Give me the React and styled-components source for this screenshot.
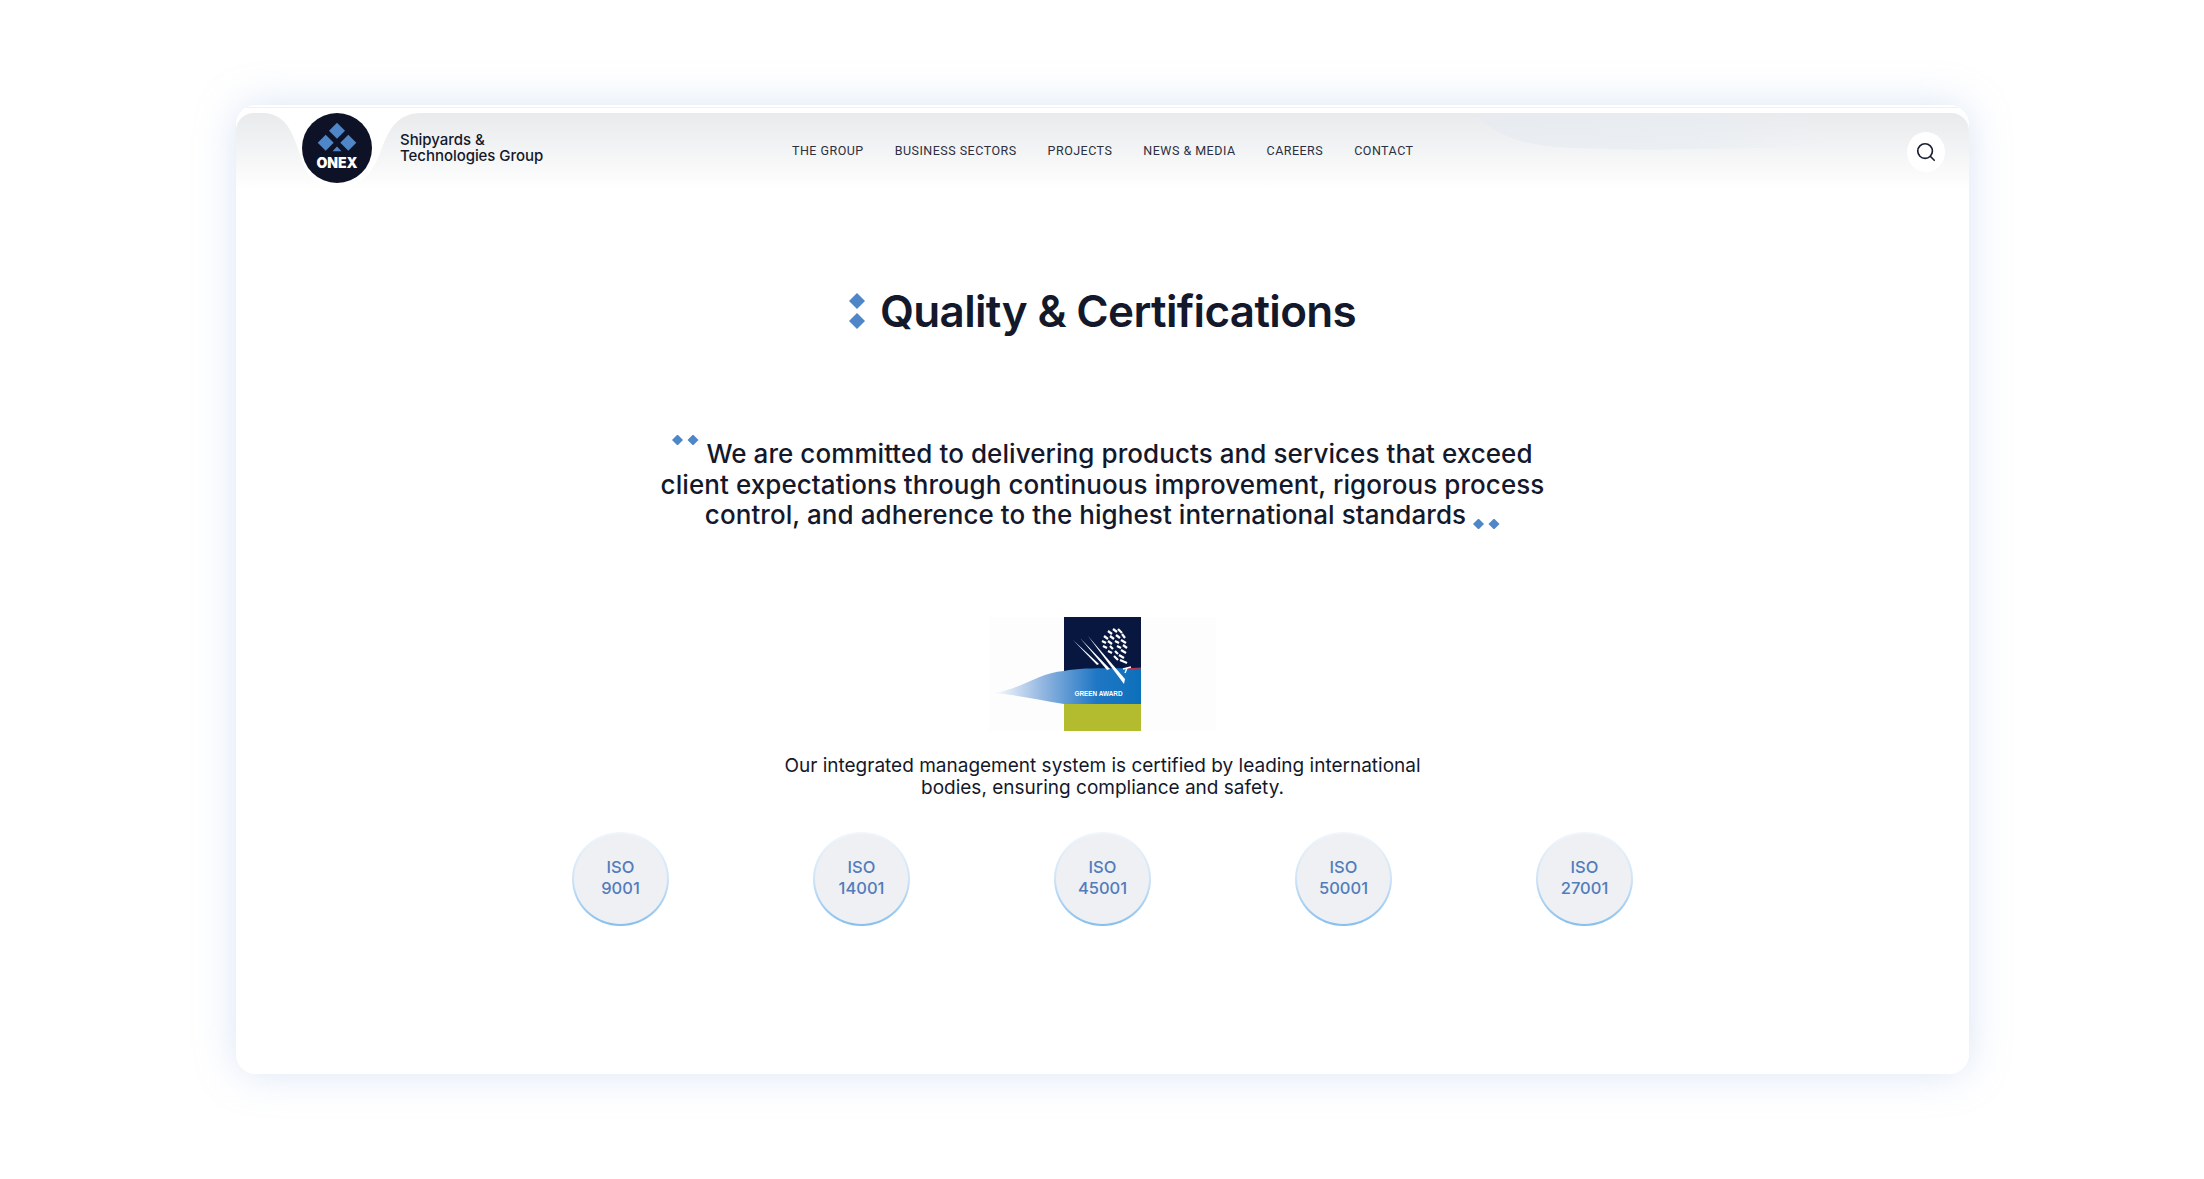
import React from 'react';
import styled, { createGlobalStyle } from 'styled-components';
import { Search } from 'lucide-react';

const GlobalStyle = createGlobalStyle`
  html, body {
    margin: 0;
    background: #fff;
  }
  body {
    font-family: "Inter", "Liberation Sans", sans-serif;
    color: #14182b;
  }
`;

const Page = styled.div`
  width: 2204px;
  height: 1179px;
  padding: 105px 235px 105px 236px;
  box-sizing: border-box;
  overflow: hidden;
`;

const Card = styled.div`
  height: 969px;
  background: linear-gradient(180deg, #fff 2px, #eef1f6 2px, #eef1f6 3px, #fff 3px);
  border-radius: 20px;
  box-shadow: 0 0 40px rgba(150, 180, 225, 0.34);
  padding-top: 8px;
  box-sizing: border-box;
`;

const Header = styled.header`
  position: relative;
  height: 77px;
  padding: 0 24px 6px 66px;
  box-sizing: border-box;
  display: flex;
  align-items: center;
  border-radius: 18px 18px 0 0;
  background: linear-gradient(180deg, #e9eaec 0%, #f3f4f5 50%, #ffffff 100%);
  overflow: hidden;
`;

const HeaderArt = styled.svg`
  position: absolute;
  top: 0;
  left: 0;
  width: 100%;
  height: 77px;
`;

const Brand = styled.div`
  position: relative;
  width: 490px;
  flex: none;
  display: flex;
  align-items: center;
  gap: 28px;
  margin-top: -1px;
`;

const BrandName = styled.div`
  font-size: 15px;
  line-height: 16px;
  font-weight: 500;
  letter-spacing: -0.05px;
  color: #14182b;
`;

const Nav = styled.nav`
  position: relative;
  display: flex;
  gap: 31px;
  margin-top: 5px;
`;

const NavLink = styled.a`
  font-family: "Roboto", "Liberation Sans", sans-serif;
  font-size: 12.5px;
  line-height: 16px;
  letter-spacing: 0.48px;
  color: #2b2f40;
`;

const SearchButton = styled.button`
  position: relative;
  margin: 7px 0 0 auto;
  width: 38px;
  height: 40px;
  border: 0;
  border-radius: 50%;
  background: #fff;
  color: #1a1e30;
  display: flex;
  align-items: center;
  justify-content: center;
  padding: 0;
`;

const Main = styled.main`
  display: flex;
  flex-direction: column;
  align-items: center;
`;

const Title = styled.h1`
  margin: 91px 0 0;
  display: flex;
  align-items: center;
  gap: 15px;
  font-size: 44px;
  line-height: 60px;
  font-weight: 600;
  letter-spacing: -0.65px;
  color: #14182b;
`;

const Statement = styled.p`
  margin: 98px 0 0;
  width: 900px;
  text-align: center;
  font-size: 26px;
  line-height: 30.6px;
  font-weight: 500;
  letter-spacing: 0.07px;
  color: #14182b;
`;

const QuoteMark = styled.svg`
  display: inline-block;
  width: 27px;
  height: 10px;
  margin: ${(props) => (props.$end ? '0 0 0 7px' : '-10px 7px 0 0')};
  vertical-align: ${(props) => (props.$end ? '-5px' : '18px')};
`;

const AwardLogo = styled.svg`
  display: block;
  width: 227px;
  height: 114px;
  margin-top: 86px;
`;

const Note = styled.p`
  margin: 24px 0 0;
  width: 680px;
  text-align: center;
  font-size: 19px;
  line-height: 22.5px;
  font-weight: 400;
  letter-spacing: 0;
  color: #14182b;
`;

const Standards = styled.div`
  margin-top: 32px;
  display: grid;
  grid-template-columns: repeat(5, 241px);
  justify-items: center;
`;

const Badge = styled.div`
  width: 97px;
  height: 94px;
  box-sizing: border-box;
  padding-bottom: 2px;
  border-radius: 50%;
  border: 2px solid transparent;
  background: linear-gradient(#eef0f3, #eef0f3) padding-box,
    linear-gradient(180deg, #f1f6fc 0%, #cfe4f7 50%, #84bfef 100%) border-box;
  display: flex;
  align-items: center;
  justify-content: center;
  text-align: center;
  font-size: 16.5px;
  line-height: 21px;
  font-weight: 500;
  color: #527cbb;
`;

const Diamond = ({ cx, cy, r, fill = '#4f86c8' }) => (
  <polygon points={`${cx},${cy - r} ${cx + r},${cy} ${cx},${cy + r} ${cx - r},${cy}`} fill={fill} />
);

const LogoMark = () => (
  <svg width="70" height="70" viewBox="0 0 70 70">
    <circle cx="35" cy="35" r="35" fill="#0e1226" />
    <Diamond cx={35} cy={17.7} r={8} />
    <Diamond cx={23.7} cy={29.7} r={8} />
    <Diamond cx={46.3} cy={29.7} r={8} />
    <polygon points="35,33.5 39.5,38.3 30.5,38.3" fill="#4f86c8" />
    <text x="35" y="55" textAnchor="middle" fill="#fff" fontFamily="Inter, sans-serif" fontWeight="900" fontSize="14">
      ONEX
    </text>
  </svg>
);

const TitleMark = () => (
  <svg width="16" height="36" viewBox="0 0 16 36">
    <Diamond cx={8} cy={8} r={8} />
    <Diamond cx={8} cy={28} r={8} />
  </svg>
);

const Quote = ({ end }) => (
  <QuoteMark $end={end} viewBox="0 0 27 10">
    <Diamond cx={5.5} cy={5} r={5.5} />
    <Diamond cx={21} cy={5} r={5.5} />
  </QuoteMark>
);

// tree of the award badge, short white dashes
const treeDashes = [
  [118, 14, 122, 17], [123, 12, 127, 15], [128, 12, 132, 16], [114, 19, 118, 22], [120, 19, 124, 22],
  [126, 18, 130, 21], [132, 17, 135, 21], [112, 24, 116, 26], [118, 24, 122, 27], [125, 24, 129, 26],
  [131, 23, 136, 26], [113, 29, 117, 31], [120, 29, 123, 32], [127, 29, 131, 31], [133, 28, 137, 31],
  [118, 34, 122, 36], [125, 34, 128, 37], [131, 33, 136, 36], [124, 39, 128, 43], [129, 38, 134, 41],
  [130, 43, 137, 46],
];

const GreenAward = () => (
  <AwardLogo viewBox="0 0 227 114">
    <defs>
      <linearGradient id="awardBlue" x1="0" x2="1" y1="0" y2="0">
        <stop offset="0" stopColor="#ffffff" />
        <stop offset="0.35" stopColor="#8fb4e0" />
        <stop offset="0.7" stopColor="#1f77c4" />
        <stop offset="1" stopColor="#0d70bb" />
      </linearGradient>
    </defs>
    <rect width="227" height="114" fill="#fdfdfd" />
    <rect x="75" width="77" height="114" fill="#081740" />
    <rect x="75" y="87" width="77" height="27" fill="#b3bb2e" />
    <path d="M3 76 C30 74 48 56 75 54 C95 50 120 52 152 51 L152 87 L75 87 C50 83 30 78 3 76 Z" fill="url(#awardBlue)" />
    <path d="M134 52 C140 52 145 51 152 51" stroke="#c4304a" strokeWidth="1.2" fill="none" />
    <polygon points="84,23 110,47 108,48" fill="#fff" />
    <polygon points="91,21 121,52 118,53" fill="#fff" />
    <polygon points="99,19 136,62 135,67" fill="#fff" />
    <path d="M134 52 L142 50 M138 51 L136 56" stroke="#fff" strokeWidth="1.4" />
    {treeDashes.map(([x1, y1, x2, y2]) => (
      <line key={`${x1}-${y1}`} x1={x1 + 1} y1={y1} x2={x2 + 1} y2={y2} stroke="#fff" strokeWidth="2.2" />
    ))}
    <text x="109.5" y="78.5" textAnchor="middle" fill="#fff" fontFamily="Liberation Sans, sans-serif" fontWeight="700" fontSize="6.4">
      GREEN AWARD
    </text>
  </AwardLogo>
);

const navItems = ['THE GROUP', 'BUSINESS SECTORS', 'PROJECTS', 'NEWS & MEDIA', 'CAREERS', 'CONTACT'];
const standards = ['9001', '14001', '45001', '50001', '27001'];

const App = () => {
  return (
    <>
      <GlobalStyle />
      <Page>
        <Card>
          <Header>
            <HeaderArt viewBox="0 0 1733 77" preserveAspectRatio="none">
              <defs>
                <linearGradient id="waveFade" x1="0" x2="1" y1="0" y2="0">
                  <stop offset="0" stopColor="#e6ebf1" />
                  <stop offset="0.6" stopColor="#e8edf2" />
                  <stop offset="1" stopColor="#e9eef3" stopOpacity="0" />
                </linearGradient>
              </defs>
              <path
                d="M27 0 C50 0 58 22 64 42 C70 64 84 76 101 76 C120 76 135 64 144 40 C152 18 160 0 186 0 Z"
                fill="#fff"
              />
              <path d="M1236 0 C1262 24 1290 34 1340 35 C1420 38 1500 36 1600 33 L1600 0 Z" fill="url(#waveFade)" opacity="0.7" />
            </HeaderArt>
            <Brand>
              <LogoMark />
              <BrandName>
                Shipyards &amp;
                <br />
                Technologies Group
              </BrandName>
            </Brand>
            <Nav>
              {navItems.map((item) => (
                <NavLink key={item}>{item}</NavLink>
              ))}
            </Nav>
            <SearchButton aria-label="Search">
              <Search size={22} strokeWidth={1.8} />
            </SearchButton>
          </Header>
          <Main>
            <Title>
              <TitleMark />
              Quality &amp; Certifications
            </Title>
            <Statement>
              <Quote />
              We are committed to delivering products and services that exceed client expectations through continuous
              improvement, rigorous process control, and adherence to the highest international standards
              <Quote end />
            </Statement>
            <GreenAward />
            <Note>
              Our integrated management system is certified by leading international bodies, ensuring compliance and
              safety.
            </Note>
            <Standards>
              {standards.map((code) => (
                <Badge key={code}>
                  ISO
                  <br />
                  {code}
                </Badge>
              ))}
            </Standards>
          </Main>
        </Card>
      </Page>
    </>
  );
};

export default App;
